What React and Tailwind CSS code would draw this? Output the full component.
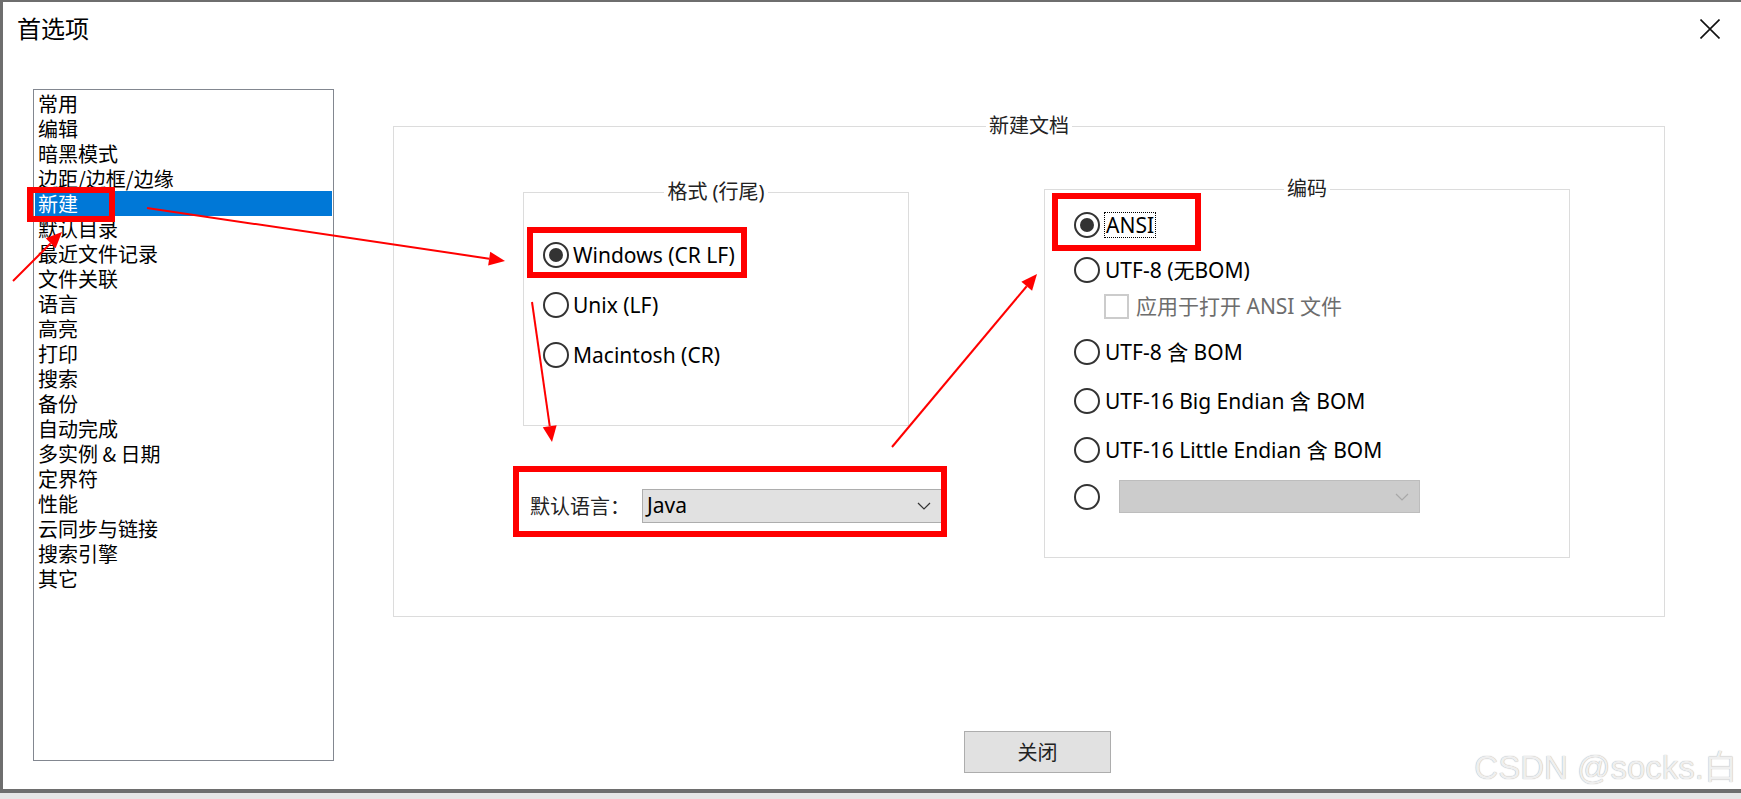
import React from 'react';

const ui = "font-['Noto_Sans','Noto_Sans_CJK_SC',sans-serif]";
const cjk = "font-['Noto_Sans_CJK_SC',sans-serif]";

const items = [
  '常用', '编辑', '暗黑模式', '边距/边框/边缘', '新建', '默认目录', '最近文件记录',
  '文件关联', '语言', '高亮', '打印', '搜索', '备份', '自动完成', '多实例 & 日期',
  '定界符', '性能', '云同步与链接', '搜索引擎', '其它',
];

const Radio = ({ checked }) => (
  <span className="w-[26px] h-[26px] rounded-full border-2 border-[#333] flex items-center justify-center shrink-0">
    {checked && <span className="w-[14px] h-[14px] rounded-full bg-[#333]" />}
  </span>
);

const Chevron = ({ color }) => (
  <svg width="14" height="8" viewBox="0 0 14 8">
    <path d="M1 1 L7 7 L13 1" fill="none" stroke={color} strokeWidth="1.2" />
  </svg>
);

// red annotation arrow with a filled head
const Arrow = ({ x1, y1, x2, y2 }) => {
  const dx = x2 - x1;
  const dy = y2 - y1;
  const len = Math.hypot(dx, dy);
  const ux = dx / len;
  const uy = dy / len;
  const bx = x2 - ux * 16;
  const by = y2 - uy * 16;
  const pts = `${x2},${y2} ${bx - uy * 7},${by + ux * 7} ${bx + uy * 7},${by - ux * 7}`;
  return (
    <g>
      <line x1={x1} y1={y1} x2={bx} y2={by} stroke="#ff0000" strokeWidth="2" />
      <polygon points={pts} fill="#ff0000" />
    </g>
  );
};

const App = () => {
  return (
    <div className="relative w-[1741px] h-[799px] bg-[#e6e6e6] overflow-hidden">
      {/* Window */}
      <div className="h-[793px] bg-white border-t-2 border-l-[3px] border-b-4 border-[#6e6e6e] flex flex-col">
        {/* Title bar */}
        <div className="h-[87px] flex items-start justify-between pl-[14px] pr-[21px]">
          <div className={`${cjk} mt-[14px] text-[24px] leading-[24px] text-black`}>首选项</div>
          <svg className="mt-[17px]" width="20" height="20" viewBox="0 0 20 20">
            <path d="M0.5 0.5 L19.5 19.5 M19.5 0.5 L0.5 19.5" stroke="#111" strokeWidth="1.6" />
          </svg>
        </div>

        {/* Body */}
        <div className="flex items-start">
          {/* Category list */}
          <div className={`${cjk} ml-[30px] w-[301px] h-[672px] border border-[#828790] p-[1px] text-[20px]`}>
            {items.map((it) => (
              <div
                key={it}
                className={`h-[25px] leading-[25px] pl-[3px] ${it === '新建' ? 'bg-[#0078d7] text-white' : 'text-black'}`}
              >
                {it}
              </div>
            ))}
          </div>

          {/* Right side */}
          <div className="ml-[59px] mt-[27px] flex flex-col">
            <fieldset className="w-[1272px] h-[501px] border border-[#dcdcdc]">
              <legend className={`${ui} mx-auto px-[3px] text-[20px] leading-[20px] text-[#222]`}>新建文档</legend>

              <div className="flex items-start pl-[129px]">
                {/* Format + language */}
                <div className="mt-[46px] w-[386px] shrink-0 flex flex-col">
                  <fieldset className="w-[386px] h-[244px] border border-[#dcdcdc]">
                    <legend className={`${ui} mx-auto px-[3px] text-[20px] leading-[20px] text-[#222]`}>格式 (行尾)</legend>
                    <div className={`${ui} pt-[28px] pl-[19px] text-[21px] text-black`}>
                      {[['Windows (CR LF)', true], ['Unix (LF)', false], ['Macintosh (CR)', false]].map(([t, c]) => (
                        <div key={t} className="h-[50px] flex items-center gap-[4px]">
                          <Radio checked={c} />
                          <span className="leading-[26px]">{t}</span>
                        </div>
                      ))}
                    </div>
                  </fieldset>

                  <div className="mt-[63px] h-[34px] flex items-center pl-[7px]">
                    <span className={`${cjk} w-[100px] shrink-0 text-[20px] text-[#222]`}>默认语言：</span>
                    <div className="ml-[12px] w-[302px] shrink-0 h-[34px] bg-[#e1e1e1] border border-[#adadad] flex items-center justify-between pl-[4px] pr-[12px]">
                      <span className={`${ui} text-[21px] text-black`}>Java</span>
                      <Chevron color="#333" />
                    </div>
                  </div>
                </div>

                {/* Encoding */}
                <fieldset className="ml-[135px] mt-[43px] w-[526px] h-[379px] shrink-0 border border-[#dcdcdc]">
                  <legend className={`${ui} mx-auto px-[3px] text-[20px] leading-[20px] text-[#222]`}>编码</legend>
                  <div className={`${ui} pl-[29px] text-[21px] text-black flex flex-col`}>
                    <div className="mt-[13px] h-[26px] flex items-center gap-[4px]">
                      <Radio checked />
                      <span className="leading-[24px] px-[1px] border border-dotted border-black">ANSI</span>
                    </div>
                    <div className="mt-[19px] h-[26px] flex items-center gap-[5px]">
                      <Radio />
                      <span className="leading-[26px]">UTF-8 (无BOM)</span>
                    </div>
                    <div className="mt-[11px] h-[25px] flex items-center pl-[30px] gap-[7px]">
                      <span className="w-[25px] h-[25px] border-2 border-[#cccccc] shrink-0" />
                      <span className="leading-[25px] text-[#6d6d6d]">应用于打开 ANSI 文件</span>
                    </div>
                    <div className="mt-[20px] h-[26px] flex items-center gap-[5px]">
                      <Radio />
                      <span className="leading-[26px]">UTF-8 含 BOM</span>
                    </div>
                    <div className="mt-[23px] h-[26px] flex items-center gap-[5px]">
                      <Radio />
                      <span className="leading-[26px]">UTF-16 Big Endian 含 BOM</span>
                    </div>
                    <div className="mt-[23px] h-[26px] flex items-center gap-[5px]">
                      <Radio />
                      <span className="leading-[26px]">UTF-16 Little Endian 含 BOM</span>
                    </div>
                    <div className="mt-[17px] h-[33px] flex items-center gap-[19px]">
                      <Radio />
                      <div className="w-[301px] h-[33px] bg-[#cccccc] border border-[#bdbdbd] flex items-center justify-end pr-[10px]">
                        <Chevron color="#a8a8a8" />
                      </div>
                    </div>
                  </div>
                </fieldset>
              </div>
            </fieldset>

            <button className={`${cjk} mt-[114px] ml-[571px] w-[147px] h-[42px] bg-[#e1e1e1] border border-[#adadad] text-[20px] text-[#222] flex items-center justify-center`}>
              关闭
            </button>
          </div>
        </div>
      </div>

      {/* Watermark */}
      <div className="absolute right-[4px] top-[751px] font-['Liberation_Sans','Noto_Sans_CJK_SC',sans-serif] text-[33px] leading-[33px] text-[#efefef] [text-shadow:0_0_1px_#9a9a9a]">
        CSDN @socks.白
      </div>

      {/* Red annotations */}
      <svg className="absolute left-0 top-0 pointer-events-none" width="1741" height="799" viewBox="0 0 1741 799">
        <rect x="30" y="190" width="82" height="29" fill="none" stroke="#ff0000" strokeWidth="6" />
        <rect x="530" y="230" width="214" height="45" fill="none" stroke="#ff0000" strokeWidth="6" />
        <rect x="1055" y="196" width="143" height="52" fill="none" stroke="#ff0000" strokeWidth="6" />
        <rect x="516" y="469" width="428" height="65" fill="none" stroke="#ff0000" strokeWidth="6" />
        <Arrow x1={147} y1={208} x2={505} y2={261} />
        <Arrow x1={13} y1={281} x2={62} y2={232} />
        <Arrow x1={532} y1={302} x2={552} y2={442} />
        <Arrow x1={892} y1={447} x2={1037} y2={274} />
      </svg>
    </div>
  );
};

export default App;
